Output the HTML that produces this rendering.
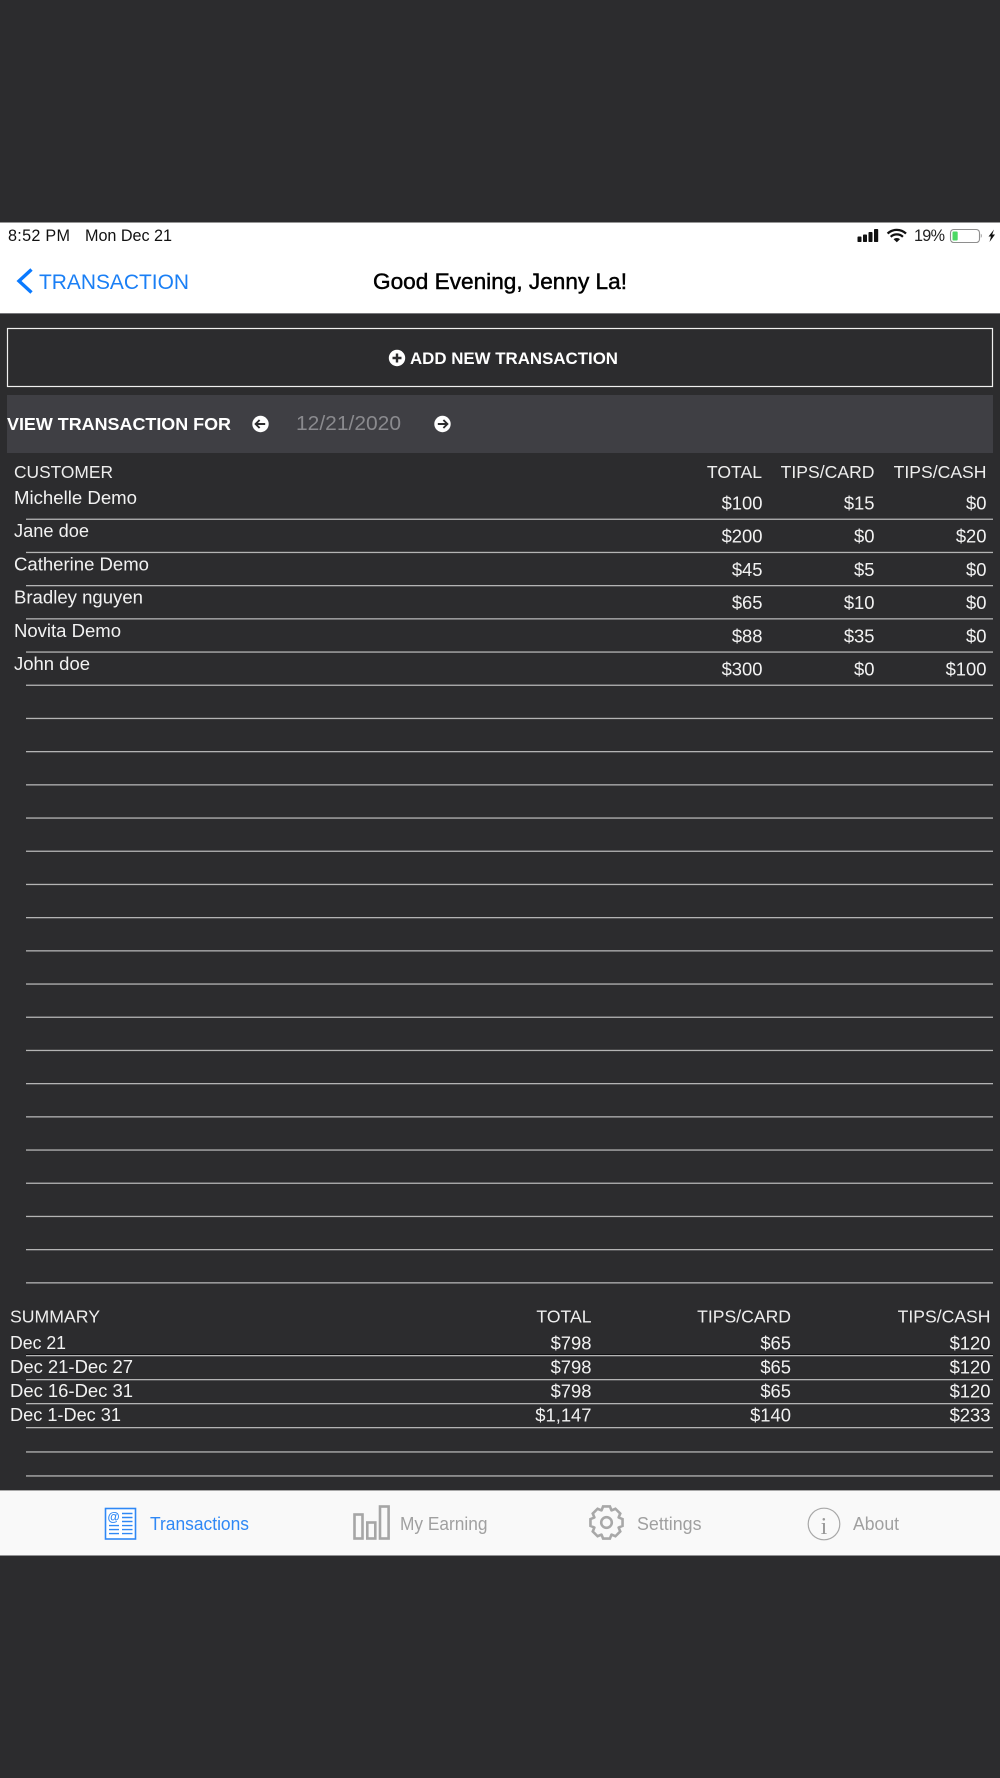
<!DOCTYPE html>
<html>
<head>
<meta charset="utf-8">
<style>
html,body{margin:0;padding:0;background:#2c2c2e;width:1000px;height:1778px;overflow:hidden}
svg{display:block;font-family:"Liberation Sans",sans-serif}
.w{fill:#f2f2f2;font-size:18.4px}
.n{fill:#f2f2f2;font-size:18.4px;text-anchor:end}
.h{fill:#eeeeee;font-size:17.6px}
.he{fill:#eeeeee;font-size:17.6px;text-anchor:end}
.t{font-size:18px;fill:#a0a0a0}
.l{fill:#b4b4b4}
.d{fill:#111113}
</style>
</head>
<body>
<svg width="1000" height="1778" viewBox="0 0 1000 1778" xmlns="http://www.w3.org/2000/svg">
<rect width="1000" height="1778" fill="#2c2c2e"/>

<!-- header -->
<rect y="222.5" width="1000" height="90.5" fill="#ffffff"/>
<rect y="313" width="1000" height="1" fill="#77777a"/>
<text x="8" y="241" font-size="16.2" fill="#111" textLength="62">8:52 PM</text>
<text x="85" y="241" font-size="16.2" fill="#111" textLength="87">Mon Dec 21</text>
<!-- signal -->
<rect x="857.5" y="236.5" width="4" height="5.5" rx=".8" fill="#111"/>
<rect x="863" y="234.5" width="4" height="7.5" rx=".8" fill="#111"/>
<rect x="868.5" y="232" width="4" height="10" rx=".8" fill="#111"/>
<rect x="874" y="229" width="4.2" height="13" rx=".8" fill="#111"/>
<!-- wifi -->
<path d="M887.6 233.6C892.8 228.6 900.8 228.6 906 233.6M890.7 236.8C894.2 233.6 899.4 233.6 902.9 236.8" fill="none" stroke="#111" stroke-width="2.3"/>
<path d="M893.6 239.2C895.6 237.6 898 237.6 900 239.2L896.8 242.3Z" fill="#111"/>
<text x="914" y="241" font-size="16.2" fill="#222" textLength="31">19%</text>
<!-- battery -->
<rect x="950.5" y="229.5" width="29" height="13" rx="3.2" fill="none" stroke="#8e8e8e" stroke-width="1.1"/>
<rect x="952.5" y="231.5" width="5.2" height="9" rx="1" fill="#4cd964"/>
<path d="M980.8 233.7c1.2.5 1.2 3.6 0 4.1z" fill="#8e8e8e"/>
<path d="M994 229.5L988.5 236.5H991L989.5 242L995 234.5H992.2Z" fill="#111"/>

<!-- nav -->
<path d="M31.5 269.5L19 281L31.5 292.5" fill="none" stroke="#0a7aff" stroke-width="3.4"/>
<text x="39" y="289" font-size="21.4" fill="#1a7ff5" textLength="150" lengthAdjust="spacingAndGlyphs">TRANSACTION</text>
<text x="373" y="289" font-size="22" fill="#000" stroke="#000" stroke-width=".45" textLength="254" lengthAdjust="spacingAndGlyphs">Good Evening, Jenny La!</text>

<!-- add button -->
<rect x="7.5" y="328.5" width="985" height="58" fill="none" stroke="#f0f0f0" stroke-width="1.2"/>
<circle cx="397" cy="358" r="8.2" fill="#fff"/>
<path d="M397 353.5V362.5M392.5 358H401.5" stroke="#2c2c2e" stroke-width="2.4" fill="none"/>
<text x="410" y="363.8" font-size="16.6" font-weight="700" fill="#fff" textLength="208" lengthAdjust="spacingAndGlyphs">ADD NEW TRANSACTION</text>

<!-- date bar -->
<rect x="7" y="395" width="986" height="58" fill="#3f3f44"/>
<text x="7" y="430" font-size="17.4" font-weight="700" fill="#fff" textLength="224" lengthAdjust="spacingAndGlyphs">VIEW TRANSACTION FOR</text>
<circle cx="260.5" cy="424" r="8.2" fill="#fff"/>
<path d="M265.2 424H256M259.6 420L255.6 424L259.6 428" stroke="#2c2c2e" stroke-width="1.9" fill="none"/>
<text x="296" y="430" font-size="20.5" fill="#8a8a8e" textLength="105" lengthAdjust="spacingAndGlyphs">12/21/2020</text>
<circle cx="442.5" cy="424" r="8.2" fill="#fff"/>
<path d="M437.8 424H447M443.4 420L447.4 424L443.4 428" stroke="#2c2c2e" stroke-width="1.9" fill="none"/>

<!-- table head -->
<text class="h" x="14" y="478" textLength="99" lengthAdjust="spacingAndGlyphs">CUSTOMER</text>
<text class="he" x="762" y="478">TOTAL</text>
<text class="he" x="874.5" y="478">TIPS/CARD</text>
<text class="he" x="986.5" y="478">TIPS/CASH</text>

<!-- rows -->
<text class="w" x="14" y="504" textLength="123" lengthAdjust="spacingAndGlyphs">Michelle Demo</text>
<text class="n" x="762.5" y="509.5">$100</text><text class="n" x="874.5" y="509.5">$15</text><text class="n" x="986.5" y="509.5">$0</text>
<text class="w" x="14" y="537" textLength="75" lengthAdjust="spacingAndGlyphs">Jane doe</text>
<text class="n" x="762.5" y="542.7">$200</text><text class="n" x="874.5" y="542.7">$0</text><text class="n" x="986.5" y="542.7">$20</text>
<text class="w" x="14" y="570.4" textLength="135" lengthAdjust="spacingAndGlyphs">Catherine Demo</text>
<text class="n" x="762.5" y="575.9">$45</text><text class="n" x="874.5" y="575.9">$5</text><text class="n" x="986.5" y="575.9">$0</text>
<text class="w" x="14" y="603.6" textLength="129" lengthAdjust="spacingAndGlyphs">Bradley nguyen</text>
<text class="n" x="762.5" y="609.1">$65</text><text class="n" x="874.5" y="609.1">$10</text><text class="n" x="986.5" y="609.1">$0</text>
<text class="w" x="14" y="636.8" textLength="107" lengthAdjust="spacingAndGlyphs">Novita Demo</text>
<text class="n" x="762.5" y="642.3">$88</text><text class="n" x="874.5" y="642.3">$35</text><text class="n" x="986.5" y="642.3">$0</text>
<text class="w" x="14" y="670" textLength="76" lengthAdjust="spacingAndGlyphs">John doe</text>
<text class="n" x="762.5" y="675.5">$300</text><text class="n" x="874.5" y="675.5">$0</text><text class="n" x="986.5" y="675.5">$100</text>

<!-- row lines -->
<g>
<rect class="l" x="26" y="518.6" width="967" height="1.3"/>
<rect class="l" x="26" y="551.8" width="967" height="1.3"/>
<rect class="l" x="26" y="585" width="967" height="1.3"/>
<rect class="l" x="26" y="618.2" width="967" height="1.3"/>
<rect class="l" x="26" y="651.4" width="967" height="1.3"/>
<rect class="l" x="26" y="684.6" width="967" height="1.3"/>
<rect class="l" x="26" y="717.8" width="967" height="1.3"/>
<rect class="l" x="26" y="751" width="967" height="1.3"/>
<rect class="l" x="26" y="784.2" width="967" height="1.3"/>
<rect class="l" x="26" y="817.4" width="967" height="1.3"/>
<rect class="l" x="26" y="850.6" width="967" height="1.3"/>
<rect class="l" x="26" y="883.8" width="967" height="1.3"/>
<rect class="l" x="26" y="917" width="967" height="1.3"/>
<rect class="l" x="26" y="950.2" width="967" height="1.3"/>
<rect class="l" x="26" y="983.4" width="967" height="1.3"/>
<rect class="l" x="26" y="1016.6" width="967" height="1.3"/>
<rect class="l" x="26" y="1049.8" width="967" height="1.3"/>
<rect class="l" x="26" y="1083" width="967" height="1.3"/>
<rect class="l" x="26" y="1116.2" width="967" height="1.3"/>
<rect class="l" x="26" y="1149.4" width="967" height="1.3"/>
<rect class="l" x="26" y="1182.6" width="967" height="1.3"/>
<rect class="l" x="26" y="1215.8" width="967" height="1.3"/>
<rect class="l" x="26" y="1249" width="967" height="1.3"/>
<rect class="l" x="26" y="1282.2" width="967" height="1.3"/>
</g>

<!-- summary -->
<text class="h" x="10" y="1322.7" textLength="90" lengthAdjust="spacingAndGlyphs">SUMMARY</text>
<text class="he" x="591.5" y="1322.7">TOTAL</text>
<text class="he" x="791" y="1322.7">TIPS/CARD</text>
<text class="he" x="990.5" y="1322.7">TIPS/CASH</text>

<text class="w" x="10" y="1349" textLength="56" lengthAdjust="spacingAndGlyphs">Dec 21</text>
<text class="n" x="591.5" y="1349.5">$798</text><text class="n" x="791" y="1349.5">$65</text><text class="n" x="990.5" y="1349.5">$120</text>
<text class="w" x="10" y="1373" textLength="123" lengthAdjust="spacingAndGlyphs">Dec 21-Dec 27</text>
<text class="n" x="591.5" y="1373.5">$798</text><text class="n" x="791" y="1373.5">$65</text><text class="n" x="990.5" y="1373.5">$120</text>
<text class="w" x="10" y="1397" textLength="123" lengthAdjust="spacingAndGlyphs">Dec 16-Dec 31</text>
<text class="n" x="591.5" y="1397.5">$798</text><text class="n" x="791" y="1397.5">$65</text><text class="n" x="990.5" y="1397.5">$120</text>
<text class="w" x="10" y="1421" textLength="111" lengthAdjust="spacingAndGlyphs">Dec 1-Dec 31</text>
<text class="n" x="591.5" y="1421.5">$1,147</text><text class="n" x="791" y="1421.5">$140</text><text class="n" x="990.5" y="1421.5">$233</text>

<rect class="d" x="26" y="1354" width="967" height="1"/>
<rect class="l" x="26" y="1355" width="967" height="1.3"/>
<rect class="l" x="26" y="1379" width="967" height="1.3"/>
<rect class="l" x="26" y="1403" width="967" height="1.3"/>
<rect class="l" x="26" y="1427" width="967" height="1.3"/>
<rect class="l" x="26" y="1451.3" width="967" height="1.3"/>
<rect class="l" x="26" y="1475.3" width="967" height="1.3"/>

<!-- tab bar -->
<rect y="1490" width="1000" height="65.5" fill="#f9f9f9"/>
<rect y="1490" width="1000" height="1" fill="#a8a8a8"/>

<!-- transactions icon -->
<rect x="105.5" y="1508.5" width="30" height="30.5" fill="#fff" stroke="#2f88f5" stroke-width="1.6"/>
<text x="107.5" y="1521" font-size="12.5" font-weight="700" fill="#2f88f5">@</text>
<path d="M122 1513.5H132.5M122 1517.5H132.5M122 1521.5H132.5M109 1525.6H119M122 1525.6H132.5M109 1529.6H119M122 1529.6H132.5M109 1533.6H119M122 1533.6H132.5" stroke="#2f88f5" stroke-width="1.4" fill="none"/>
<text x="150" y="1530" font-size="18" fill="#2f88f5" textLength="99" lengthAdjust="spacingAndGlyphs">Transactions</text>

<!-- earning icon -->
<g fill="none" stroke="#a6a6a6" stroke-width="2.6">
<rect x="354.5" y="1514.5" width="8" height="24"/>
<rect x="367.3" y="1522.5" width="8" height="16"/>
<rect x="380" y="1506.5" width="8.6" height="32"/>
</g>
<text class="t" x="400" y="1530" textLength="87.5" lengthAdjust="spacingAndGlyphs">My Earning</text>

<!-- gear -->
<g transform="translate(606.5 1522.5)" fill="none" stroke="#a8a8a8" stroke-width="2.6">
<path d="M-4.94-12.24L-3.41-16.04L3.41-16.04L4.94-12.24L5.16-12.15L8.93-13.75L13.75-8.93L12.15-5.16L12.24-4.94L16.04-3.41L16.04 3.41L12.24 4.94L12.15 5.16L13.75 8.93L8.93 13.75L5.16 12.15L4.94 12.24L3.41 16.04L-3.41 16.04L-4.94 12.24L-5.16 12.15L-8.93 13.75L-13.75 8.93L-12.15 5.16L-12.24 4.94L-16.04 3.41L-16.04-3.41L-12.24-4.94L-12.15-5.16L-13.75-8.93L-8.93-13.75L-5.16-12.15Z"/>
<circle r="5.3"/>
</g>
<text class="t" x="637" y="1530" textLength="64.5" lengthAdjust="spacingAndGlyphs">Settings</text>

<!-- info -->
<circle cx="824" cy="1524" r="15.8" fill="none" stroke="#a8a8a8" stroke-width="1.2"/>
<text x="824" y="1534" font-size="24" fill="#999" text-anchor="middle" style="font-family:'Liberation Serif',serif">i</text>
<text class="t" x="853" y="1530" textLength="46" lengthAdjust="spacingAndGlyphs">About</text>
</svg>
</body>
</html>
